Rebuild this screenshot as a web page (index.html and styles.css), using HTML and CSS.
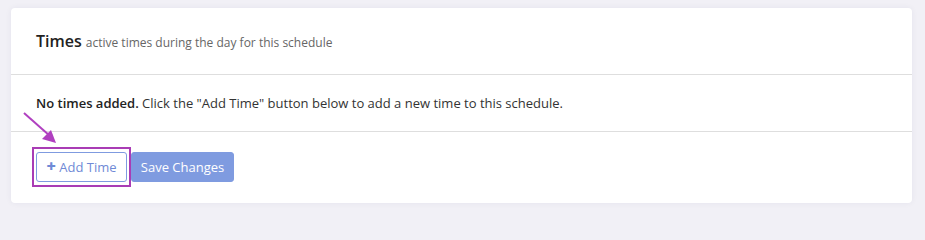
FILE: index.html
```html
<!DOCTYPE html>
<html>
<head>
<meta charset="utf-8">
<link rel="stylesheet" href="styles.css">
</head>
<body>
<div class="card">
  <div class="card-header">
    <span class="title">Times</span>
    <span class="subtitle">active times during the day for this schedule</span>
  </div>
  <div class="card-body">
    <p class="empty"><strong>No times added.</strong> Click the "Add Time" button below to add a new time to this schedule.</p>
  </div>
  <div class="card-footer">
    <div class="highlight">
      <button class="btn btn-outline"><span class="plus">+</span> Add Time</button>
    </div>
    <button class="btn btn-primary">Save Changes</button>
  </div>
  <svg class="arrow" width="40" height="40" viewBox="0 0 40 40">
    <line x1="1" y1="1" x2="27" y2="24" stroke="#b040c0" stroke-width="2"/>
    <polygon points="33,31 19,27 28,18" fill="#b040c0"/>
  </svg>
</div>
</body>
</html>
```
FILE: styles.css
```css
html, body {
  margin: 0;
  padding: 0;
}
body {
  background: #f1f0f6;
  font-family: "Open Sans", "Liberation Sans", sans-serif;
  color: #222;
  padding: 8px 13px 11px 11px;
}
.card {
  position: relative;
  background: #fff;
  border-radius: 4px;
  box-shadow: 0 0 6px rgba(40, 40, 90, 0.06);
}
.card-header {
  padding: 0 25px;
  display: flex;
  align-items: center;
  border-bottom: 1px solid #dedede;
  box-sizing: border-box;
  height: 67px;
}
.title {
  font-size: 16px;
  font-weight: 600;
  color: #222;
  margin-right: 4px;
}
.subtitle {
  font-size: 12px;
  color: #666;
  padding-top: 3px;
}
.card-body {
  height: 57px;
  box-sizing: border-box;
  padding: 0 25px;
  display: flex;
  align-items: center;
  border-bottom: 1px solid #dedede;
}
.empty {
  margin: 0;
  font-size: 13px;
  color: #333;
}
.empty strong {
  font-weight: 600;
  color: #222;
}
.card-footer {
  display: flex;
  align-items: center;
  padding: 15px 21px 16px 21px;
}
.highlight {
  border: 2px solid #a93cb5;
  padding: 3px 2px;
  display: flex;
}
.btn {
  font-family: "Open Sans", "Liberation Sans", sans-serif;
  font-size: 13px;
  height: 30px;
  border-radius: 3px;
  cursor: pointer;
}
.btn-outline {
  background: #fff;
  border: 1px solid #7f9be0;
  color: #6f8ad6;
  width: 91px;
  padding: 0;
}
.plus {
  font-weight: 800;
  font-size: 16px;
  line-height: 1;
}
.btn-primary {
  background: #7f9be0;
  border: 1px solid #7f9be0;
  color: #fff;
  width: 103px;
  padding: 0;
}
.arrow {
  position: absolute;
  left: 12px;
  top: 104px;
}
```
